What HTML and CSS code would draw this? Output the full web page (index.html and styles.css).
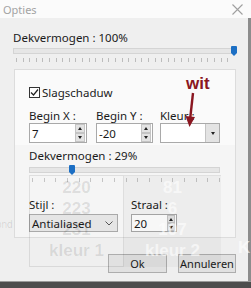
FILE: index.html
```html
<!DOCTYPE html>
<html lang="nl">
<head>
  <meta charset="UTF-8">
  <meta name="viewport" content="width=device-width, initial-scale=1.0">
  <title>Opties</title>
  <link rel="stylesheet" href="styles.css">
</head>
<body>

<div class="window">
  <div class="titlebar">
    <span class="title">Opties</span>
    <svg class="close" width="11" height="11" viewBox="0 0 11 11">
      <path d="M0.5 0.5L10.5 10.5M10.5 0.5L0.5 10.5" stroke="#a0a0a0" stroke-width="1.1"/>
    </svg>
  </div>

  <div class="content">
    <div class="label top-label">Dekvermogen : 100%</div>
    <div class="slider slider-main">
      <div class="track"></div>
      <div class="thumb" style="left: 218px"></div>
    </div>
    <div class="ticks ticks-main"></div>

    <!-- Slagschaduw panel -->
    <div class="panel">
      <div class="check">
        <span class="box">
          <svg width="9" height="9" viewBox="0 0 9 9"><path d="M1 4.5L3.5 7L8 1.5" fill="none" stroke="#222" stroke-width="1.2"/></svg>
        </span>
        Slagschaduw
      </div>

      <div class="fields">
        <div class="field field-x">
          <div class="label">Begin X :</div>
          <div class="input spin"><span class="value">7</span>
            <div class="arrows"><span class="up"></span><span class="down"></span></div>
          </div>
        </div>
        <div class="field field-y">
          <div class="label">Begin Y :</div>
          <div class="input spin"><span class="value">-20</span>
            <div class="arrows"><span class="up"></span><span class="down"></span></div>
          </div>
        </div>
        <div class="field field-color">
          <div class="label">Kleur :</div>
          <div class="input combo"><span class="value"></span>
            <div class="drop"><span class="down"></span></div>
          </div>
        </div>
      </div>

      <div class="label sub-label">Dekvermogen : 29%</div>
      <div class="slider slider-sub">
        <div class="track"></div>
        <div class="thumb" style="left: 40px"></div>
      </div>
      <div class="ticks ticks-sub"></div>

      <div class="fields lower">
        <div class="field field-style">
          <div class="label">Stijl :</div>
          <div class="input select"><span class="value">Antialiased</span>
            <svg class="chev" width="8" height="5" viewBox="0 0 8 5"><path d="M0.5 0.5L4 4L7.5 0.5" fill="none" stroke="#555" stroke-width="1"/></svg>
          </div>
        </div>
        <div class="field field-radius">
          <div class="label">Straal :</div>
          <div class="input spin small"><span class="value">20</span>
            <div class="arrows"><span class="up"></span><span class="down"></span></div>
          </div>
        </div>
      </div>
    </div>

    <div class="buttons">
      <button class="btn btn-ok">Ok</button>
      <button class="btn btn-cancel">Annuleren</button>
    </div>
  </div>

  <div class="taskbar"></div>

  <!-- window behind, showing through -->
  <div class="ghost">
    <div class="ghost-box kleur1">
      <span>220</span><span>223</span><span>231</span><span>kleur 1</span>
    </div>
    <div class="ghost-box kleur2">
      <span>81</span><span>6</span><span>107</span><span>kleur 2</span>
    </div>
    <div class="ghost-text kleur3">Kl</div>
    <div class="ghost-text side">ond</div>
  </div>

  <!-- annotation -->
  <div class="note">
    <span class="note-text">wit</span>
    <svg class="arrow" width="14" height="36" viewBox="0 0 14 36">
      <path d="M9 1L6 28" stroke="#8a1620" stroke-width="2.4"/>
      <path d="M1.5 24L5.5 35L11 25Z" fill="#8a1620"/>
    </svg>
  </div>
</div>

</body>
</html>
```

FILE: styles.css
```css
body {
  margin: 0;
  padding: 0;
  font-family: 'Noto Sans', 'Open Sans', sans-serif;
  font-size: 11.5px;
  color: #1a1a1a;
  background-color: #f0f0f0;
}

.window {
  position: relative;
  width: 251px;
  height: 288px;
  overflow: hidden;
  background-color: #efefef;
}

.titlebar {
  height: 18px;
  background-color: #fbfbfb;
  display: flex;
  align-items: center;
  justify-content: space-between;
  padding: 0 8px 0 3px;
}

.titlebar .title {
  color: #a3a3a3;
  font-size: 11px;
}

.content {
  height: 263px;
  box-sizing: border-box;
  border-right: 3px solid #8c8c8c;
  padding-top: 13px;
}

.label {
  line-height: 14px;
  white-space: nowrap;
}

.top-label {
  margin-left: 13px;
}

/* sliders */
.slider {
  position: relative;
  height: 10px;
}

.slider .track {
  position: absolute;
  left: 0;
  right: 0;
  top: 2px;
  height: 4px;
  background-color: #e6e6e6;
  border: 1px solid #d4d4d4;
}

.slider .thumb {
  position: absolute;
  top: 0;
  width: 6px;
  height: 7px;
  background-color: #1c6fc4;
  border-radius: 1px 1px 0 0;
}

.slider .thumb::after {
  content: '';
  position: absolute;
  top: 7px;
  left: 0;
  border-left: 3px solid transparent;
  border-right: 3px solid transparent;
  border-top: 3px solid #1c6fc4;
}

.slider-main {
  margin: 1px 14px 0 13px;
}

.ticks {
  height: 4px;
  margin-top: 3px;
}

.ticks-main {
  margin-top: 2px;
  margin-left: 16px;
  width: 218px;
  background: repeating-linear-gradient(90deg, #bcbcbc 0, #bcbcbc 1px, transparent 1px, transparent 6.6px);
}

/* panel */
.panel {
  margin: 7px 0 0 14px;
  width: 222px;
  height: 169px;
  box-sizing: border-box;
  border: 1px solid #dcdcdc;
  background: linear-gradient(#fafafa 0, #fafafa 75px, #f5f5f5 75px);
  padding: 17px 0 0 14px;
}

.check {
  display: flex;
  align-items: center;
  height: 11px;
  line-height: 11px;
}

.check .box {
  width: 9px;
  height: 9px;
  border: 1px solid #333;
  background-color: #fff;
  margin-right: 2px;
  display: flex;
}

.fields {
  display: flex;
  margin-top: 12px;
}

.field .label {
  line-height: 12px;
}

.field-x {
  width: 58px;
  margin-right: 9px;
}

.field-y {
  width: 57px;
  margin-right: 7px;
}

.field-color {
  width: 60px;
}

.input {
  position: relative;
  height: 20px;
  box-sizing: border-box;
  border: 1px solid #a9a9a9;
  background-color: #fff;
  margin-top: 1px;
  display: flex;
  align-items: center;
}

.input .value {
  padding-left: 2px;
  flex: 1;
}

.arrows {
  width: 10px;
  height: 18px;
  display: flex;
  flex-direction: column;
  margin-right: 1px;
}

.arrows span,
.drop {
  flex: 1;
  background-color: #e3e3e3;
  border: 1px solid #c4c4c4;
  display: flex;
  align-items: center;
  justify-content: center;
}

.arrows .up::after {
  content: '';
  border-left: 2.5px solid transparent;
  border-right: 2.5px solid transparent;
  border-bottom: 3px solid #222;
}

.arrows .down::after,
.drop .down::after {
  content: '';
  display: block;
  border-left: 2.5px solid transparent;
  border-right: 2.5px solid transparent;
  border-top: 3px solid #222;
}

.drop {
  flex: 0 0 14px;
  height: 18px;
  box-sizing: border-box;
  border-width: 0 0 0 1px;
}

.sub-label {
  margin-top: 6px;
}

.slider-sub {
  margin-top: 2px;
  width: 191px;
}

.ticks-sub {
  margin-left: 3px;
  width: 188px;
  background: repeating-linear-gradient(90deg, #c4c4c4 0, #c4c4c4 1px, transparent 1px, transparent 11.7px);
}

.fields.lower {
  margin-top: 16px;
}

.field-style {
  width: 89px;
  margin-right: 13px;
}

.field-radius {
  width: 46px;
}

.lower .label {
  line-height: 14px;
}

.input.select {
  height: 18px;
  background-color: #e5e5e5;
  margin-top: 2px;
}

.select .chev {
  margin-right: 4px;
}

.input.small {
  height: 18px;
  margin-top: 2px;
}

.input.small .arrows {
  height: 16px;
  width: 8px;
}

/* buttons */
.buttons {
  display: flex;
  gap: 11px;
  margin: 16px 0 0 108px;
}

.btn {
  font-family: inherit;
  font-size: 11px;
  height: 19px;
  padding: 0;
  background-color: #e1e1e1;
  border: 1px solid #adadad;
  color: #1a1a1a;
  line-height: 15px;
}

.btn-ok {
  width: 59px;
}

.btn-cancel {
  width: 58px;
}

.taskbar {
  height: 7px;
  background-color: #4d4d4d;
  border-top: 1px solid #9a9a9a;
}

/* window behind */
.ghost {
  position: absolute;
  inset: 0;
  pointer-events: none;
  font-family: 'Liberation Sans', sans-serif;
  font-weight: bold;
  font-size: 17px;
}

.ghost-box {
  position: absolute;
  top: 175px;
  height: 92px;
  box-sizing: border-box;
  display: flex;
  flex-direction: column;
  align-items: center;
  padding-top: 1px;
  line-height: 21px;
}

.kleur1 {
  left: 29px;
  width: 95px;
  border: 1px solid rgba(0, 0, 0, 0.09);
  color: rgba(0, 0, 0, 0.1);
}

.kleur2 {
  left: 124px;
  width: 97px;
  background-color: rgba(0, 0, 0, 0.03);
  border-top: 1px solid rgba(0, 0, 0, 0.05);
  color: rgba(255, 255, 255, 0.6);
}

.ghost-text {
  position: absolute;
  color: rgba(255, 255, 255, 0.6);
}

.kleur3 {
  left: 238px;
  top: 238px;
}

.side {
  left: -4px;
  top: 219px;
  font-size: 10px;
  font-weight: normal;
  color: rgba(0, 0, 0, 0.12);
}

/* annotation */
.note {
  position: absolute;
  left: 184px;
  top: 76px;
  display: flex;
  flex-direction: column;
  align-items: flex-start;
}

.note-text {
  font-family: 'Liberation Sans', sans-serif;
  font-weight: bold;
  font-size: 17px;
  line-height: 16px;
  color: #8a1620;
  margin-left: 2px;
}
```
